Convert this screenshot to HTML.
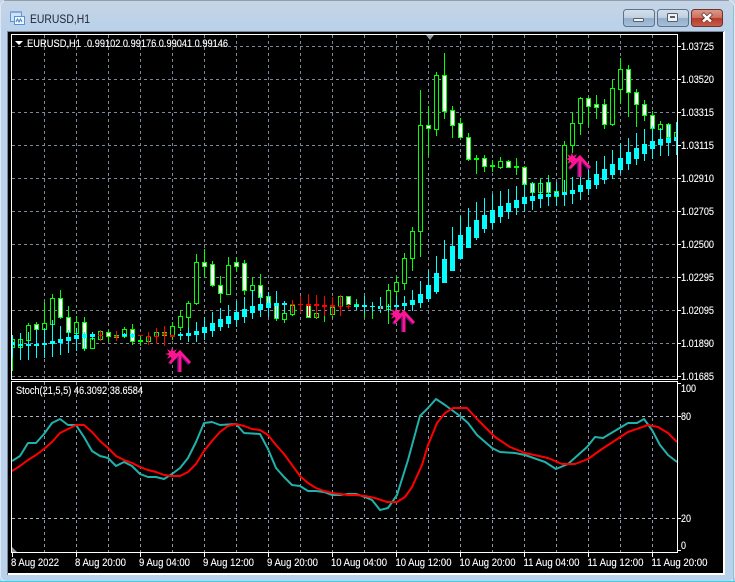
<!DOCTYPE html>
<html><head><meta charset="utf-8"><title>EURUSD,H1</title>
<style>
html,body{margin:0;padding:0;background:#b9d1ea}
svg{display:block}
text{font-family:"Liberation Sans",sans-serif;fill:#fff;font-size:11px;stroke:#fff;stroke-width:.12}
</style></head><body>
<svg width="735" height="582" viewBox="0 0 735 582" xmlns="http://www.w3.org/2000/svg">
<defs>
<linearGradient id="tb" x1="0" y1="0" x2="0" y2="1"><stop offset="0" stop-color="#c6d5e5"/><stop offset="1" stop-color="#b9d1ea"/></linearGradient>
<linearGradient id="bb" x1="0" y1="0" x2="0" y2="1"><stop offset="0" stop-color="#d5e0ec"/><stop offset=".48" stop-color="#c0d0e2"/><stop offset=".52" stop-color="#94aeca"/><stop offset="1" stop-color="#a8c2dc"/></linearGradient>
<linearGradient id="cb" x1="0" y1="0" x2="0" y2="1"><stop offset="0" stop-color="#dc9a8c"/><stop offset=".48" stop-color="#d0705f"/><stop offset=".52" stop-color="#b53a28"/><stop offset="1" stop-color="#c8604c"/></linearGradient>
<clipPath id="mc"><rect x="12" y="35" width="665" height="344"/></clipPath>
<clipPath id="sc"><rect x="12" y="382" width="665" height="170"/></clipPath>
<g id="ar">
<path d="M-10 12L0 1 10 12" fill="none" stroke="#5a1070" stroke-width="3" transform="translate(-1 1)"/>
<path d="M-1 3V21" stroke="#5a1070" stroke-width="4"/>
<path d="M-10 12L0 1 10 12" fill="none" stroke="#ff1493" stroke-width="2.800"/>
<path d="M0 2V21" stroke="#ff1493" stroke-width="3"/>
<polygon points="-1,3 -5.200,4.100 -3,8 -6.900,5.800 -8,10 -9.100,5.800 -13,8 -10.800,4.100 -15,3 -10.800,1.900 -13,-2 -9.100,0.200 -8,-4 -6.900,0.200 -3,-2 -5.200,1.900" fill="#ff1493"/>
</g>
</defs>
<rect width="735" height="582" fill="#b9d1ea"/>
<rect x="0" y="0" width="735" height="31" fill="url(#tb)"/>
<rect x="0.5" y="0.5" width="734" height="581" rx="6" fill="none" stroke="#dfe8f2"/>
<path d="M4 .5H729" stroke="#8f9fb0"/>
<path d="M0 581.5H735" stroke="#2fd3e6"/>
<path d="M733.5 6V581" stroke="#8fc0d8"/>
<rect x="7" y="31" width="718" height="544" fill="#fff"/>
<path d="M7.5 31V575M7 31.5H724" stroke="#7a8694"/>
<rect x="8" y="32" width="715" height="541" fill="#000"/>

<!-- window icon -->
<g shape-rendering="crispEdges">
<rect x="10.5" y="11.5" width="11" height="10" fill="#cfe2f6" stroke="#5d92d2"/>
<rect x="14.5" y="16.5" width="10" height="8" fill="#eef5fc" stroke="#5d92d2"/>
<path d="M10 11h12v2H10z" fill="#7eaae0"/>
</g>
<path d="M16 22l1.500-3 1.500 3 1.500-3 1.500 3" fill="none" stroke="#4a7fc0" stroke-width="1"/>
<text x="30" y="23" style="font-size:12px;fill:#1c2230;stroke:none" textLength="60" lengthAdjust="spacingAndGlyphs">EURUSD,H1</text>

<!-- window buttons -->
<rect x="623.5" y="9.5" width="31" height="17" rx="3" fill="url(#bb)" stroke="#5f7187"/>
<rect x="657.5" y="9.5" width="31" height="17" rx="3" fill="url(#bb)" stroke="#5f7187"/>
<rect x="691.5" y="9.5" width="31" height="17" rx="3" fill="url(#cb)" stroke="#6a3230"/>
<rect x="633.5" y="18.5" width="10" height="3" rx="1" fill="#f2f5f8" stroke="#55606c"/>
<rect x="667.5" y="13.5" width="10" height="8" rx="1" fill="#eef2f6" stroke="#55606c"/>
<rect x="670" y="16" width="5" height="2" fill="#55606c"/>
<path d="M702.5 13.5l4.500 4.500 4.500-4.500M702.500 21.500l4.500-4 4.500 4" fill="none" stroke="#5e2a26" stroke-width="4"/>
<path d="M703 14l4 4 4-4M703 21.500l4-3.500 4 3.500" fill="none" stroke="#fff" stroke-width="2.600"/>

<!-- grid -->
<g shape-rendering="crispEdges" fill="none" stroke-dasharray="3 3">
<path clip-path="url(#mc)" stroke="#7a8898" d="M12 46.500H677M12 79.500H677M12 112.500H677M12 145.500H677M12 178.500H677M12 211.500H677M12 244.500H677M12 277.500H677M12 310.500H677M12 343.500H677M12 376.500H677M44.500 35V379M76.500 35V379M108.500 35V379M140.500 35V379M172.500 35V379M204.500 35V379M236.500 35V379M268.500 35V379M300.500 35V379M332.500 35V379M364.500 35V379M396.500 35V379M428.500 35V379M460.500 35V379M492.500 35V379M524.500 35V379M556.500 35V379M588.500 35V379M620.500 35V379M652.500 35V379"/>
<path stroke="#a9b4c0" d="M12 416.500H677M12 518.500H677"/>
<path stroke="#8794a6" d="M44.500 382V552M76.500 382V552M108.500 382V552M140.500 382V552M172.500 382V552M204.500 382V552M236.500 382V552M268.500 382V552M300.500 382V552M332.500 382V552M364.500 382V552M396.500 382V552M428.500 382V552M460.500 382V552M492.500 382V552M524.500 382V552M556.500 382V552M588.500 382V552M620.500 382V552M652.500 382V552"/>
</g>

<!-- candles -->
<g clip-path="url(#mc)" shape-rendering="crispEdges">
<path fill="none" stroke="#00ff00" d="M12.500 340V371M20.500 337V349M28.500 323V342M36.500 322V330M44.500 302V343M52.500 294V327M60.500 290V319M68.500 306V334M76.500 316V335M84.500 317V351M92.500 332V349M100.500 330V341M108.500 330V342M116.500 331V340M124.500 327V337M132.500 324V345M140.500 336V346M148.500 332V345M156.500 332V342M164.500 331V337M172.500 322V340M180.500 310V331M188.500 301V334M196.500 254V305M204.500 249V277M212.500 261V287M220.500 276V303M228.500 257V294M236.500 257V272M244.500 260V295M252.500 277V293M260.500 274V298M268.500 292V304M276.500 291V321M284.500 301V323M292.500 303V316M308.500 303V318M316.500 305V319M324.500 310V322M332.500 300V318M340.500 295V307M348.500 296V306M356.500 299V309M364.500 296V318M372.500 302V319M380.500 297V313M388.500 284V324M396.500 276V300M404.500 253V290M412.500 227V271M420.500 90V257M428.500 106V156M436.500 72V136M444.500 53V119M452.500 106V138M460.500 118V139M468.500 133V161M476.500 155V174M484.500 155V172M492.500 160V172M500.500 157V169M508.500 160V168M516.500 158V175M524.500 166V185M532.500 182V193M540.500 178V193M548.500 175V193M556.500 190V197M564.500 141V196M572.500 112V153M580.500 97V135M588.500 97V126M596.500 95V119M604.500 99V129M612.500 80V126M620.500 58V104M628.500 65V117M636.500 89V127M644.500 100V121M652.500 111V133M660.500 121V130M668.500 123V138M676.500 130V140"/>
<path fill="#000" stroke="#00ff00" d="M10.500 339.500h4v8h-4zM18.500 339.500h4v8h-4zM26.500 325.500h4v15h-4zM42.500 323.500h4v6h-4zM50.500 298.500h4v26h-4zM74.500 322.500h4v11h-4zM90.500 338.500h4v10h-4zM98.500 331.500h4v8h-4zM114.500 335.500h4v2h-4zM122.500 329.500h4v7h-4zM146.500 336.500h4v5h-4zM154.500 332.500h4v4h-4zM170.500 326.500h4v10h-4zM178.500 316.500h4v11h-4zM186.500 303.500h4v14h-4zM194.500 262.500h4v41h-4zM226.500 265.500h4v29h-4zM250.500 285.500h4v5h-4zM282.500 313.500h4v6h-4zM290.500 305.500h4v9h-4zM314.500 313.500h4v4h-4zM330.500 307.500h4v7h-4zM338.500 296.500h4v10h-4zM386.500 290.500h4v19h-4zM394.500 282.500h4v9h-4zM402.500 258.500h4v25h-4zM410.500 231.500h4v27h-4zM418.500 125.500h4v106h-4zM434.500 75.500h4v54h-4zM498.500 161.500h4v6h-4zM538.500 183.500h4v9h-4zM562.500 145.500h4v47h-4zM570.500 123.500h4v22h-4zM578.500 98.500h4v25h-4zM610.500 88.500h4v36h-4zM618.500 69.500h4v20h-4zM658.500 124.500h4v5h-4zM674.500 132.500h4v5h-4z"/>
<path fill="#fff" stroke="#00ff00" d="M34.500 324.500h4v5h-4zM58.500 298.500h4v19h-4zM66.500 317.500h4v15h-4zM82.500 322.500h4v26h-4zM106.500 332.500h4v4h-4zM130.500 329.500h4v12h-4zM162.500 332.500h4v3h-4zM202.500 262.500h4v4h-4zM210.500 264.500h4v21h-4zM218.500 285.500h4v8h-4zM234.500 262.500h4v4h-4zM242.500 263.500h4v27h-4zM258.500 285.500h4v12h-4zM266.500 296.500h4v7h-4zM274.500 303.500h4v15h-4zM306.500 305.500h4v12h-4zM346.500 296.500h4v8h-4zM426.500 125.500h4v3h-4zM442.500 75.500h4v36h-4zM450.500 110.500h4v15h-4zM458.500 123.500h4v14h-4zM466.500 137.500h4v22h-4zM482.500 158.500h4v8h-4zM506.500 161.500h4v6h-4zM522.500 167.500h4v17h-4zM530.500 183.500h4v9h-4zM546.500 182.500h4v10h-4zM554.500 191.500h4v5h-4zM586.500 98.500h4v8h-4zM594.500 104.500h4v3h-4zM602.500 104.500h4v20h-4zM626.500 69.500h4v23h-4zM634.500 92.500h4v12h-4zM642.500 104.500h4v11h-4zM650.500 115.500h4v13h-4zM666.500 124.500h4v13h-4z"/>
<path fill="#00ff00" d="M138 340h5v2h-5zM354 304h5v2h-5zM474 158h5v2h-5zM490 165h5v2h-5zM514 166h5v2h-5z"/>
<!-- cyan series -->
<path fill="none" stroke="#00ffff" d="M12.500 335V358M20.500 333V360M28.500 332V360M36.500 329V358M44.500 328V358M52.500 320V357M60.500 326V355M68.500 330V353M76.500 328V351M84.500 332V350M92.500 332V340M124.500 333V338M132.500 333V338M180.500 332V340M188.500 327V342M196.500 322V342M204.500 317V340M212.500 312V337M220.500 308V331M228.500 305V328M236.500 301V327M244.500 297V323M252.500 290V319M260.500 293V317M268.500 292V317M276.500 291V319M284.500 301V313M356.500 302V310M364.500 296V313M372.500 302V312M380.500 297V312M388.500 304V312M396.500 296V313M404.500 296V310M412.500 290V311M420.500 281V308M428.500 270V302M436.500 256V294M444.500 240V283M452.500 227V271M460.500 216V259M468.500 208V248M476.500 202V240M484.500 198V233M492.500 194V229M500.500 191V223M508.500 189V219M516.500 186V215M524.500 183V212M532.500 182V210M540.500 180V208M548.500 178V206M556.500 182V206M564.500 180V206M572.500 177V204M580.500 173V200M588.500 168V195M596.500 161V189M604.500 156V184M612.500 150V179M620.500 143V174M628.500 138V170M636.500 133V165M644.500 129V161M652.500 126V159M660.500 128V156M668.500 124V156M676.500 122V155"/>
<path fill="#00ffff" d="M10 342h5v3h-5zM18 344h5v2h-5zM26 344h5v2h-5zM34 344h5v2h-5zM42 343h5v2h-5zM50 341h5v3h-5zM58 339h5v4h-5zM66 337h5v4h-5zM74 335h5v4h-5zM82 334h5v4h-5zM90 334h5v3h-5zM122 334h5v2h-5zM130 334h5v3h-5zM178 334h5v2h-5zM186 333h5v3h-5zM194 331h5v4h-5zM202 327h5v6h-5zM210 323h5v8h-5zM218 319h5v8h-5zM226 316h5v8h-5zM234 312h5v8h-5zM242 309h5v8h-5zM250 306h5v7h-5zM258 304h5v6h-5zM266 303h5v5h-5zM274 303h5v3h-5zM282 303h5v2h-5zM354 305h5v2h-5zM362 305h5v2h-5zM370 306h5v1h-5zM378 306h5v3h-5zM386 306h5v1h-5zM394 305h5v2h-5zM402 303h5v3h-5zM410 300h5v5h-5zM418 294h5v9h-5zM426 285h5v14h-5zM434 273h5v19h-5zM442 259h5v24h-5zM450 246h5v25h-5zM458 235h5v24h-5zM466 227h5v21h-5zM474 220h5v18h-5zM482 215h5v14h-5zM490 210h5v13h-5zM498 206h5v11h-5zM506 203h5v9h-5zM514 200h5v8h-5zM522 197h5v7h-5zM530 196h5v5h-5zM538 194h5v5h-5zM546 194h5v3h-5zM554 193h5v3h-5zM562 192h5v3h-5zM570 190h5v4h-5zM578 185h5v7h-5zM586 180h5v9h-5zM594 174h5v11h-5zM602 169h5v11h-5zM610 164h5v11h-5zM618 158h5v12h-5zM626 152h5v12h-5zM634 148h5v11h-5zM642 144h5v10h-5zM650 141h5v8h-5zM658 139h5v6h-5zM666 138h5v5h-5zM674 137h5v4h-5z"/>
<!-- red series -->
<path fill="none" stroke="#ff0000" d="M100.500 330V341M116.500 331V341M148.500 332V345M156.500 328V344M164.500 326V346M292.500 300V313M300.500 296V313M308.500 294V316M316.500 295V318M324.500 296V316M332.500 297V316M340.500 295V316M348.500 304V309M380.500 306V310"/>
<path fill="#ff0000" d="M98 335h5v1h-5zM114 336h5v1h-5zM138 335h5v1h-5zM146 336h5v1h-5zM154 336h5v1h-5zM162 333h5v2h-5zM170 335h5v2h-5zM290 304h5v1h-5zM298 304h5v1h-5zM306 304h5v2h-5zM314 304h5v2h-5zM322 305h5v2h-5zM330 305h5v2h-5zM338 306h5v1h-5zM346 306h5v1h-5z"/>
</g>

<!-- arrows -->
<g clip-path="url(#mc)">
<use href="#ar" x="180" y="351"/>
<use href="#ar" x="404" y="311"/>
<use href="#ar" x="580" y="156"/>
</g>
<polygon points="426,35 434,35 430,40" fill="#8a95a3"/>

<!-- stochastic -->
<g clip-path="url(#sc)" fill="none" stroke-width="2" stroke-linejoin="round">
<polyline stroke="#20b2aa" points="12,461 20,456 28,443 36,443 44,434 52,423 60,419 68,425 76,425 84,437 92,451 100,456 108,458 116,466 124,462 132,466 140,474 148,477 156,477 164,479 172,474 180,468 188,458 196,442 204,423 212,422 220,425 228,424.500 236,424 244,433 252,433.500 260,434 268,449 276,468 284,477 292,485 300,486 308,491 316,491 324,492 332,495 340,495 348,494 356,494 365,497 372,500 380,510 388,508 397,495 408,460 420,416 428,408 436,399 445,405 460,416 468,423 477,435 492,448 500,452 515,453 525,455 545,462 556,469 568,464 587,447 595,437 603,438 613,432 628,423 637,423 644,419 652,430 660,445 668,455 677,462"/>
<polyline stroke="#ff0000" points="12,471 20,466 28,460 36,455 44,449 52,442 60,433 68,429 76,425 84,425 92,432 100,441 108,448 116,456 124,460 132,463 140,467 148,470 156,472 164,475 172,476 180,476 188,472 196,464 204,451 212,441 220,432 228,426 236,424 244,426 252,429 260,430 268,435 276,445 284,454 292,465 300,476 308,483 316,488 324,491 332,493 340,494 348,495 356,495 365,496 375,498 387,502 397,502 405,497 412,487 422,465 428,445 437,423 445,413 453,408 467,408 478,420 495,437 510,447 525,453 548,458 562,464 575,464 588,459 602,449 628,432 648,425 658,427 668,433 677,442"/>
</g>
<polygon points="12,547 17,552 12,552" fill="#8d98a6"/>

<!-- frames + ticks -->
<g shape-rendering="crispEdges" fill="none" stroke="#fff">
<path d="M11.500 34.500H677.500V379.500H11.500Z"/>
<path d="M11.500 381.500H677.500V552.500H11.500Z"/>
<path d="M678 46.500h3M678 79.500h3M678 112.500h3M678 145.500h3M678 178.500h3M678 211.500h3M678 244.500h3M678 277.500h3M678 310.500h3M678 343.500h3M678 376.500h3M678 383.500h3M678 416.500h3M678 518.500h3M678 550.500h3"/>
<path d="M12.500 553v4M76.500 553v4M140.500 553v4M204.500 553v4M268.500 553v4M332.500 553v4M396.500 553v4M460.500 553v4M524.500 553v4M588.500 553v4M652.500 553v4"/>
</g>

<!-- legends -->
<polygon points="15,41 23,41 19,45" fill="#fff"/>
<text x="27" y="47" textLength="54" lengthAdjust="spacingAndGlyphs">EURUSD,H1</text>
<text x="87" y="47" textLength="141" lengthAdjust="spacingAndGlyphs">0.99102 0.99176 0.99041 0.99146</text>
<text x="16" y="394" textLength="127" lengthAdjust="spacingAndGlyphs">Stoch(21,5,5) 46.3092 38.6584</text>

<!-- price axis -->
<text x="681" y="50" textLength="33" lengthAdjust="spacingAndGlyphs">1.03725</text>
<text x="681" y="83" textLength="33" lengthAdjust="spacingAndGlyphs">1.03520</text>
<text x="681" y="116" textLength="33" lengthAdjust="spacingAndGlyphs">1.03315</text>
<text x="681" y="149" textLength="33" lengthAdjust="spacingAndGlyphs">1.03115</text>
<text x="681" y="182" textLength="33" lengthAdjust="spacingAndGlyphs">1.02910</text>
<text x="681" y="215" textLength="33" lengthAdjust="spacingAndGlyphs">1.02705</text>
<text x="681" y="248" textLength="33" lengthAdjust="spacingAndGlyphs">1.02500</text>
<text x="681" y="281" textLength="33" lengthAdjust="spacingAndGlyphs">1.02295</text>
<text x="681" y="314" textLength="33" lengthAdjust="spacingAndGlyphs">1.02095</text>
<text x="681" y="347" textLength="33" lengthAdjust="spacingAndGlyphs">1.01890</text>
<text x="681" y="380" textLength="33" lengthAdjust="spacingAndGlyphs">1.01685</text>
<text x="681" y="392" textLength="15" lengthAdjust="spacingAndGlyphs">100</text>
<text x="681" y="420" textLength="10" lengthAdjust="spacingAndGlyphs">80</text>
<text x="681" y="522" textLength="10" lengthAdjust="spacingAndGlyphs">20</text>
<text x="681" y="549" textLength="5" lengthAdjust="spacingAndGlyphs">0</text>

<!-- time axis -->
<text x="11" y="566" textLength="48" lengthAdjust="spacingAndGlyphs">8 Aug 2022</text>
<text x="75" y="566" textLength="51" lengthAdjust="spacingAndGlyphs">8 Aug 20:00</text>
<text x="139" y="566" textLength="51" lengthAdjust="spacingAndGlyphs">9 Aug 04:00</text>
<text x="203" y="566" textLength="51" lengthAdjust="spacingAndGlyphs">9 Aug 12:00</text>
<text x="267" y="566" textLength="51" lengthAdjust="spacingAndGlyphs">9 Aug 20:00</text>
<text x="331" y="566" textLength="56" lengthAdjust="spacingAndGlyphs">10 Aug 04:00</text>
<text x="395.500" y="566" textLength="56" lengthAdjust="spacingAndGlyphs">10 Aug 12:00</text>
<text x="459.500" y="566" textLength="56" lengthAdjust="spacingAndGlyphs">10 Aug 20:00</text>
<text x="523.500" y="566" textLength="56" lengthAdjust="spacingAndGlyphs">11 Aug 04:00</text>
<text x="587.500" y="566" textLength="56" lengthAdjust="spacingAndGlyphs">11 Aug 12:00</text>
<text x="651.500" y="566" textLength="56" lengthAdjust="spacingAndGlyphs">11 Aug 20:00</text>
</svg>
</body></html>
